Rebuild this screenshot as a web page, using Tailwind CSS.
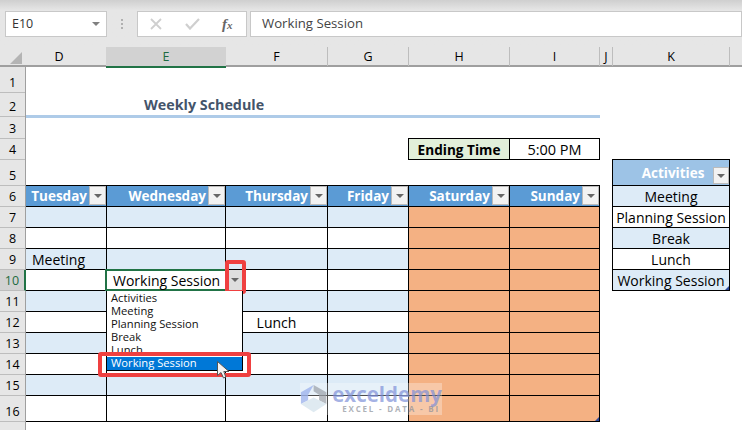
<!DOCTYPE html>
<html lang="en">
<head>
    <meta charset="UTF-8">
    <title>Weekly Schedule</title>
    <script src="https://cdn.jsdelivr.net/npm/@tailwindcss/browser@4"></script>
</head>
<body class="bg-white text-black font-['Open_Sans',sans-serif] overflow-hidden">
<div class="relative w-[742px] h-[430px] overflow-hidden">

    <!-- formula bar -->
    <div class="h-[47px] bg-[#e6e6e6] bg-gradient-to-b from-[#cfcfcf] to-[#e6e6e6] to-[22%] flex items-start pt-[11px] pl-[5px]">
        <div class="w-[102px] h-[26px] bg-white border border-[#c8c8c8] flex items-center justify-between pl-[6px] pr-[6px] text-[12.5px] text-[#333]">
            <span>E10</span>
            <span class="w-0 h-0 border-x-[4px] border-x-transparent border-t-[4px] border-t-[#808080]"></span>
        </div>
        <div class="w-[30px] flex flex-col items-center gap-[2px] pt-[8px]">
            <span class="w-[2px] h-[2px] bg-[#b0b0b0]"></span>
            <span class="w-[2px] h-[2px] bg-[#b0b0b0]"></span>
            <span class="w-[2px] h-[2px] bg-[#b0b0b0]"></span>
        </div>
        <div class="w-[110px] h-[26px] bg-white border border-[#c8c8c8] flex items-center">
            <svg class="ml-[12px]" width="12" height="12" viewBox="0 0 12 12"><path d="M1 1 L11 11 M11 1 L1 11" stroke="#cfcfcf" stroke-width="1.8" fill="none"/></svg>
            <svg class="ml-[23px]" width="15" height="12" viewBox="0 0 15 12"><path d="M1 6 L5 10.5 L14 1" stroke="#cfcfcf" stroke-width="2.2" fill="none"/></svg>
            <span class="ml-[22px] font-['Liberation_Serif',serif] italic text-[15px] text-[#666] font-bold">f<span class="text-[11px]">x</span></span>
        </div>
        <div class="ml-[3px] flex-1 h-[26px] bg-white border border-[#c8c8c8] flex items-center pl-[11px] text-[13.2px] text-[#444]">Working Session</div>
    </div>

    <!-- column headers -->
    <div class="h-[20px] bg-[#e6e6e6] border-b-2 border-[#9f9f9f] grid grid-cols-[26px_80px_120px_102px_81px_101px_90px_13px_117px_12px] text-[12.5px] text-center leading-[19px]">
        <div class="relative"><span class="absolute right-[4px] bottom-[2px] w-0 h-0 border-l-[12px] border-l-transparent border-b-[12px] border-b-[#b4b4b4]"></span></div>
        <div class="pr-[14px]">D</div>
        <div class="bg-[#d2d2d2] text-[#1d6b41] -mb-[2px] border-b-2 border-[#217346]">E</div>
        <div class="border-r border-[#bdbdbd]">F</div>
        <div class="border-r border-[#bdbdbd]">G</div>
        <div class="border-r border-[#bdbdbd]">H</div>
        <div class="border-r border-[#bdbdbd]">I</div>
        <div class="border-r border-[#bdbdbd]">J</div>
        <div class="border-r border-[#bdbdbd]">K</div>
        <div></div>
    </div>

    <div class="flex">
        <!-- row headers -->
        <div id="rowHeads" class="w-[26px] bg-[#e6e6e6] border-r border-[#9f9f9f] text-[12.5px] text-center h-[363px]"></div>

        <!-- sheet -->
        <div class="flex-1">
            <div class="h-[25px]"></div>
            <div class="h-[26px] w-[574px] border-b-[3px] border-[#aecbe8] text-[14.3px] font-bold text-[#44546a] leading-[26px] pl-[118px]">Weekly Schedule</div>
            <div class="h-[20px]"></div>

            <div class="flex h-[21px]">
                <div class="w-[382px]"></div>
                <div class="w-[192px] h-[22px] flex border border-black text-center">
                    <div class="w-[101px] bg-[#e2efda] border-r border-black font-bold text-[13.6px] leading-[21px]">Ending Time</div>
                    <div class="flex-1 text-[14.5px] leading-[21px]">5:00 PM</div>
                </div>
            </div>

            <div class="flex">
                <div class="w-[574px]">
                    <div class="h-[26px]"></div>
                    <div id="schedule"></div>
                </div>
                <div class="w-[12px]"></div>
                <div id="activities" class="w-[118px] text-[14px] text-center"></div>
            </div>
        </div>
    </div>

    <!-- table resize corner -->
    <span class="absolute left-[595px] top-[417px] w-0 h-0 border-l-[4px] border-l-transparent border-b-[4px] border-b-[#2f4b9b]"></span>

    <!-- active cell -->
    <div class="absolute left-[105px] top-[269px] w-[122px] h-[22px] border-2 border-[#217346]"></div>
    <div class="absolute left-[113px] top-[271px] text-[14px] leading-[20px]">Working Session</div>

    <!-- in-cell dropdown button -->
    <div class="absolute left-[227px] top-[270px] w-[15px] h-[20px] bg-[#dedede] flex items-center justify-center">
        <span class="w-0 h-0 border-x-[4px] border-x-transparent border-t-[4px] border-t-[#666]"></span>
    </div>
    <div class="absolute left-[225px] top-[260px] w-[21px] h-[34px] border-4 border-[#ef4040] rounded-[3px]"></div>

    <!-- list -->
    <div class="absolute left-[106px] top-[291px] w-[137px] h-[80px] bg-white border border-black border-t-0 text-[11.2px] leading-[13px] text-[#111] pl-[4px] overflow-hidden">
        <div>Activities</div>
        <div>Meeting</div>
        <div>Planning Session</div>
        <div>Break</div>
        <div>Lunch</div>
    </div>
    <div class="absolute left-[107px] top-[357px] w-[135px] h-[13px] bg-[#0078d7] text-white text-[11.2px] leading-[12px] pl-[4px]">Working Session</div>
    <div class="absolute left-[98px] top-[352px] w-[153px] h-[25px] border-4 border-[#ef4040] rounded-[3px]"></div>

    <!-- pointer -->
    <svg class="absolute left-[217px] top-[361px]" width="15" height="20" viewBox="0 0 15 20"><path d="M0.5 0.5 L0.5 14.5 L4 11.5 L6.5 17 L8.8 16 L6.8 10.5 L12 10.5 Z" fill="#f4f4f4" stroke="#555" stroke-width="1"/></svg>

    <!-- watermark -->
    <div class="absolute left-[300px] top-[383px] w-[142px] h-[32px] bg-white/30 flex items-start">
        <svg width="28" height="31" viewBox="0 0 30 32"><path d="M15 1 L29 9 L29 22 L21 18 L21 12 L15 8 Z" fill="#9aa0a8" opacity="0.7"/><path d="M15 1 L1 9 L1 22 L9 18 L9 12 Z" fill="#9fb4ec" opacity="0.8"/><path d="M1 22 L15 31 L29 22 L15 15 Z" fill="#d7e5ee" opacity="0.8"/></svg>
        <div class="ml-[5px] pt-[1px]">
            <div class="text-[20.5px] font-bold text-[#7d8fd8]/70 leading-[21px]">exceldemy</div>
            <div class="text-[8px] font-bold tracking-[1.8px] text-[#8a8f99]/70 pl-[10px] leading-[8px] whitespace-nowrap">EXCEL - DATA - BI</div>
        </div>
    </div>
</div>

<script>
    // row header heights, rows 1 to 16
    const rowHeights = [26, 24, 22, 21, 26, 21, 21, 21, 21, 21, 21, 21, 21, 21, 21, 26];
    document.getElementById('rowHeads').innerHTML = rowHeights.map((h, i) => {
        const selected = i === 9;
        return `<div style="height:${h}px" class="flex items-end justify-center leading-[18px] border-b border-[#bdbdbd] ${selected ? 'bg-[#d2d2d2] text-[#1d6b41] -mr-[1px] border-r-2 border-r-[#217346]' : ''}">${i + 1}</div>`;
    }).join('');

    const days = ['Tuesday', 'Wednesday', 'Thursday', 'Friday', 'Saturday', 'Sunday'];
    const widths = [81, 119, 102, 81, 101, 90];
    const arrow = `<span class="absolute right-0 top-0 w-[17px] h-[19px] bg-[#f2f2f2] border border-[#bbb] flex items-center justify-center"><span class="w-0 h-0 border-x-[4px] border-x-transparent border-t-[4px] border-t-[#666]"></span></span>`;

    let html = '<div class="flex h-[22px] border-t border-black">';
    days.forEach((d, i) => {
        html += `<div style="width:${widths[i]}px" class="relative bg-[#5b9bd5] border-r border-b border-black text-white font-bold text-[13.5px] leading-[21px] text-right pr-[19px] whitespace-nowrap">${d}${arrow}</div>`;
    });
    html += '</div>';

    const cells = { '3-0': 'Meeting', '6-2': 'Lunch' };
    for (let r = 1; r <= 10; r++) {
        const stripe = r % 2 === 1 ? 'bg-[#ddebf7]' : 'bg-white';
        html += `<div class="flex ${r === 10 ? 'h-[26px]' : 'h-[21px]'}">`;
        days.forEach((d, i) => {
            const bg = i >= 4 ? 'bg-[#f4b183]' : stripe;
            const text = cells[`${r}-${i}`] || '';
            const align = i === 0 ? 'pl-[6px]' : 'text-center';
            html += `<div style="width:${widths[i]}px" class="${bg} ${align} border-r border-b border-black text-[14px] leading-[22px]">${text}</div>`;
        });
        html += '</div>';
    }
    document.getElementById('schedule').innerHTML = html;

    const activities = ['Meeting', 'Planning Session', 'Break', 'Lunch', 'Working Session'];
    let list = `<div class="relative h-[27px] bg-[#9dc3e6] border border-black text-white font-bold text-[13.5px] leading-[26px] pl-[4px]">Activities<span class="absolute right-0 top-[7px] w-[16px] h-[17px] bg-[#f2f2f2] border border-[#bbb] flex items-center justify-center"><span class="w-0 h-0 border-x-[4px] border-x-transparent border-t-[4px] border-t-[#666]"></span></span></div>`;
    activities.forEach((a, i) => {
        list += `<div class="relative h-[21px] ${i % 2 === 0 ? 'bg-[#ddebf7]' : 'bg-white'} border-x border-b border-black leading-[21px] whitespace-nowrap">${a}${i === 4 ? '<span class="absolute right-0 bottom-0 w-0 h-0 border-l-[4px] border-l-transparent border-b-[4px] border-b-[#2f4b9b]"></span>' : ''}</div>`;
    });
    document.getElementById('activities').innerHTML = list;
</script>
</body>
</html>
